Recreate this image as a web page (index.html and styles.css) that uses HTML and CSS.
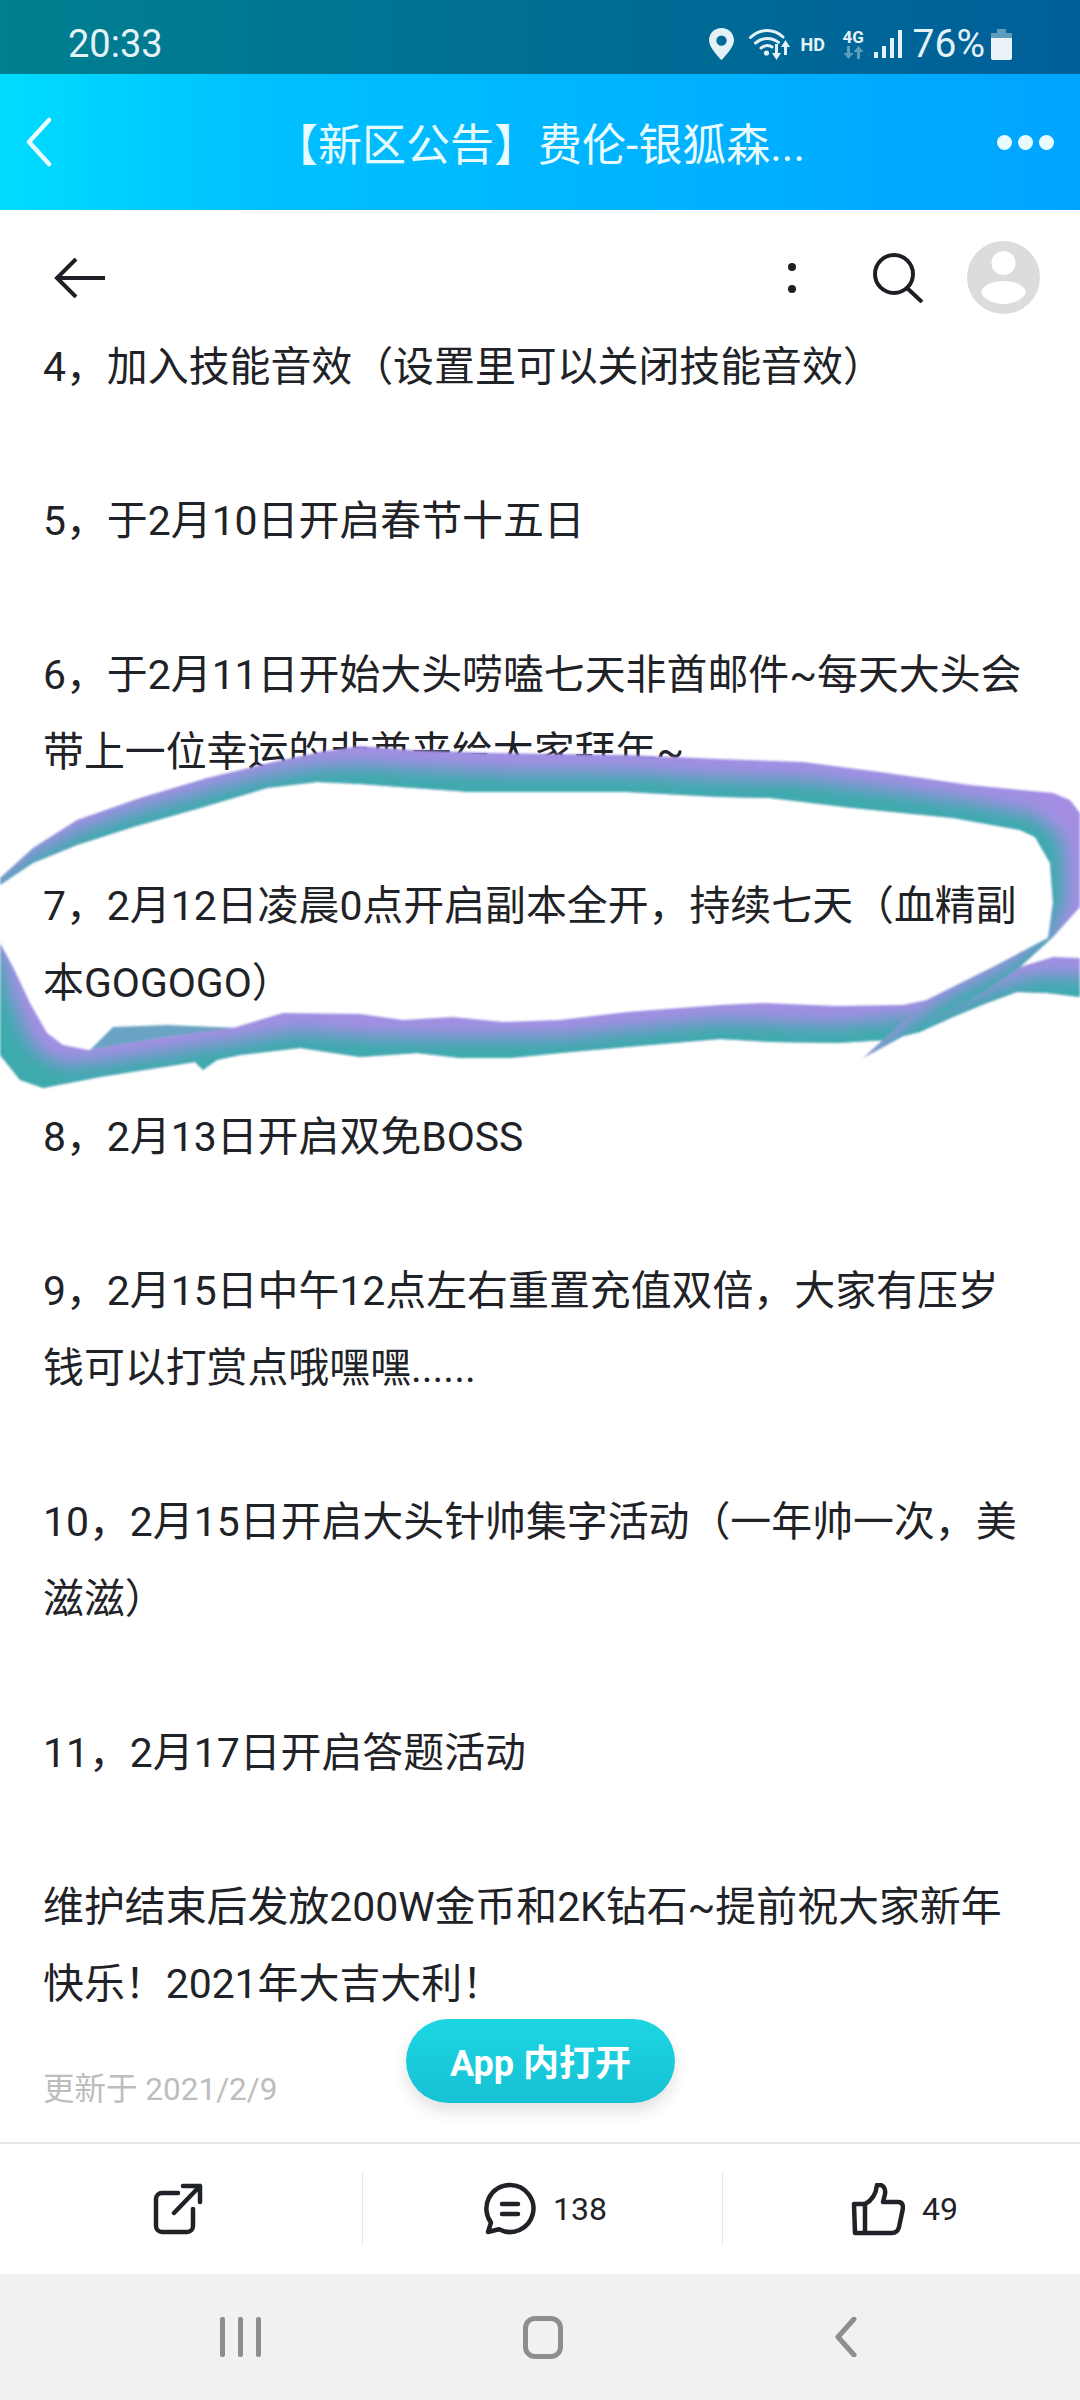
FILE: index.html
```html
<!DOCTYPE html>
<html lang="zh-CN">

<head>
    <meta charset="UTF-8">
    <meta name="viewport" content="width=device-width, initial-scale=1.0">
    <title>新区公告</title>
    <link rel="stylesheet" href="styles.css">
</head>

<body>
    <div class="phone">
        <!--状态栏-->
        <div class="status-bar">
            <span class="clock">20:33</span>
            <div class="status-icons">
                <svg class="ic-pin" viewBox="0 0 25 32"><path fill-rule="evenodd" d="M12.5 0C5.6 0 0 5.4 0 12.2 0 20 12.5 32 12.5 32S25 20 25 12.2C25 5.4 19.4 0 12.5 0zm0 7.4a5.2 5.2 0 1 1 0 10.4 5.2 5.2 0 0 1 0-10.4z"/></svg>
                <svg class="ic-wifi" viewBox="0 0 41 33">
                    <g fill="none" stroke="#e4f2f8" stroke-width="3" stroke-linecap="round">
                        <path d="M1.5 9.5C11 .2 25 .2 34 9"/>
                        <path d="M6.5 15c7-6 16-6 23-.6"/>
                        <path d="M12 20c4-3 8-3 11-1"/>
                    </g>
                    <circle cx="17.5" cy="25" r="2.6" fill="#e4f2f8"/>
                    <path fill="#e4f2f8" d="M26 16h3v9h3l-4.500 7-4.500-7h3zM32 19l4.500-7 4.500 7h-3v8h-3v-8z"/>
                </svg>
                <span class="ic-hd">HD</span>
                <div class="net">
                    <span class="net-label">4G</span>
                    <svg class="net-arrows" viewBox="0 0 23 13"><path d="M4 0h3v7h3.500L5.500 13 .5 7H4zM17 13h-3V6h-3.500l5-6 5 6H17z"/></svg>
                </div>
                <svg class="ic-signal" viewBox="0 0 28 28"><path d="M0 22h4v6H0zM8 16h4v12H8zM16 8h4v20h-4zM24 0h4v28h-4z"/></svg>
                <span class="battery-num">76%</span>
                <div class="battery">
                    <div class="battery-cap"></div>
                    <div class="battery-top"></div>
                    <div class="battery-body"></div>
                </div>
            </div>
        </div>

        <!--标题栏-->
        <div class="title-bar">
            <svg class="title-back" viewBox="0 0 26 50"><path d="M23 3 3 25l20 22"/></svg>
            <div class="title-text">【新区公告】费伦-银狐森...</div>
            <div class="title-more"><i></i><i></i><i></i></div>
        </div>

        <!--工具栏-->
        <div class="tool-bar">
            <svg class="tool-back" viewBox="0 0 52 40"><path d="M22 1 3 20l19 19M3 20h48"/></svg>
            <div class="tool-right">
                <div class="tool-dots"><i></i><i></i></div>
                <svg class="tool-search" viewBox="0 0 52 50"><circle cx="22" cy="21" r="19"/><path d="M35 35l15 14"/></svg>
                <svg class="tool-avatar" viewBox="0 0 73 73">
                    <circle cx="36.500" cy="36.500" r="36.500" fill="#dcdcdc"/>
                    <ellipse cx="36.500" cy="22" rx="12" ry="12" fill="#fff"/>
                    <path fill="#fff" d="M14 52c1-8 12-12 22.500-12S58 44 59 52c-4 7-13 11-22.500 11S18 59 14 52z"/>
                </svg>
            </div>
        </div>

        <!--正文-->
        <div class="content">
            <p>4，加入技能音效（设置里可以关闭技能音效）</p>
            <p>5，于2月10日开启春节十五日</p>
            <p>6，于2月11日开始大头唠嗑七天非酋邮件~每天大头会带上一位幸运的非酋来给大家拜年~</p>
            <p>7，2月12日凌晨0点开启副本全开，持续七天（血精副本GOGOGO）</p>
            <p>8，2月13日开启双免BOSS</p>
            <p>9，2月15日中午12点左右重置充值双倍，大家有压岁钱可以打赏点哦嘿嘿......</p>
            <p>10，2月15日开启大头针帅集字活动（一年帅一次，美滋滋）</p>
            <p>11，2月17日开启答题活动</p>
            <p class="last">维护结束后发放200W金币和2K钻石~提前祝大家新年快乐！2021年大吉大利！</p>
            <div class="updated">更新于 2021/2/9</div>
        </div>

        <!--底部操作栏-->
        <div class="action-bar">
            <div class="action">
                <svg class="ic-share" viewBox="0 0 50 52"><path d="M25 10H9a6 6 0 0 0-6 6v27a6 6 0 0 0 6 6h25a6 6 0 0 0 6-6V26M21 30 47 3M30 3h17v16"/></svg>
            </div>
            <div class="action">
                <svg class="ic-comment" viewBox="0 0 52 54"><path d="M26 3a23.500 23.500 0 1 1-11 44.300L4 50l3-9.500A23.500 23.500 0 0 1 26 3z"/><path d="M18 22h16M18 32h16" stroke-width="4.500"/></svg>
                <span class="count">138</span>
            </div>
            <div class="action">
                <svg class="ic-like" viewBox="0 0 54 53"><path d="M14 21c8-4 11-10 12-19 6-1 9 3 8 9l-2 8h15c4 0 5 3 5 6l-4 19c-1 4-3 6-7 6H14zM14 21H3l1 29h10"/></svg>
                <span class="count">49</span>
            </div>
        </div>

        <!--系统导航栏-->
        <div class="nav-bar">
            <div class="nav-recent"><i></i><i></i><i></i></div>
            <div class="nav-home"></div>
            <svg class="nav-back" viewBox="0 0 22 40"><path d="M19 2 3 20l16 18"/></svg>
        </div>

        <div class="open-app">App 内打开</div>

        <!--手写圈-->
        <svg class="scribble" viewBox="0 720 1080 400">
            <defs>
                <clipPath id="bandTop"><path d="M0 878 33 848 77 820 140 798 207 778 273 762 320 752 360 746 410 750 493 753 627 755 720 759 803 762 887 773 970 785 1053 793 1070 800 1080 813 1080 907 1053 937 1020 967 987 990 920 1027 863 1058 927 1000 987 970 1048 938 1053 903 1050 863 1035 837 1020 830 953 818 853 808 770 798 720 797 627 792 527 792 470 792 400 787 360 784 317 782 267 788 200 808 133 827 77 845 33 863 0 885z"/></clipPath>
                <clipPath id="bandBottom"><path d="M0 943 13 967 30 1003 47 1033 63 1045 88 1050 167 1037 233 1028 283 1013 360 1014 403 1020 453 1017 503 1022 560 1020 627 1012 720 1005 763 1003 837 1006 903 1005 927 1000 987 970 1020 967 1053 957 1080 958 1080 997 1047 993 1017 992 987 1003 953 1017 920 1032 887 1040 837 1043 770 1042 720 1039 627 1047 560 1053 510 1058 460 1058 417 1053 360 1057 300 1048 240 1055 217 1060 203 1070 195 1062 100 1077 43 1088 20 1080 0 1055z"/></clipPath>
                <filter id="blend" filterUnits="userSpaceOnUse" x="-60" y="700" width="1200" height="440"><feGaussianBlur stdDeviation="9"/></filter>
                <filter id="edge" filterUnits="userSpaceOnUse" x="-10" y="720" width="1100" height="400"><feGaussianBlur stdDeviation="1"/></filter>
            </defs>
            <g filter="url(#edge)">
                <path class="flap" d="M90 1050 113 1027 167 1025 240 1028 167 1037z"/>
                <g clip-path="url(#bandBottom)">
                    <rect class="purple" x="0" y="720" width="1080" height="400"/>
                    <path class="teal" filter="url(#blend)" d="M1120 977 1080 977 1050 975 1018 980 960 1003 923 1016 837 1025 720 1021 627 1030 560 1037 460 1038 360 1036 300 1031 233 1042 167 1052 100 1062 63 1065 35 1050 20 1020 8 985 0 950-40 950-40 1120 1120 1120z"/>
                </g>
                <g clip-path="url(#bandTop)">
                    <rect class="purple" x="0" y="720" width="1080" height="400"/>
                    <path class="teal" filter="url(#blend)" d="M-40 905 0 881 33 855 77 832 133 812 200 793 267 775 317 767 360 765 410 768 493 772 627 773 720 778 803 780 887 790 970 802 1035 815 1062 840 1066 900 1050 935 600 900 0 900zM1050 935 1005 968 960 990 920 1015 863 1060 1000 1090 1120 980z"/>
                </g>
            </g>
        </svg>
    </div>
</body>

</html>
```

FILE: styles.css
```css
* {
    margin: 0;
    padding: 0;
    box-sizing: border-box;
}

body {
    font-family: Roboto, "Noto Sans CJK SC", sans-serif;
    background-color: #fff;
}

svg {
    display: block;
}

.phone {
    width: 1080px;
    height: 2400px;
    position: relative;
    overflow: hidden;
    display: flex;
    flex-direction: column;
}

/*状态栏*/

.status-bar {
    height: 74px;
    flex: none;
    display: flex;
    align-items: center;
    justify-content: space-between;
    padding: 14px 68px 0 68px;
    background: linear-gradient(90deg, #007f8f, #005f99);
    color: #e4f2f8;
}

.clock {
    font-size: 38px;
}

.status-icons {
    display: flex;
    align-items: center;
}

.ic-pin {
    width: 25px;
    height: 32px;
    fill: #e4f2f8;
    margin-right: 15px;
}

.ic-wifi {
    width: 41px;
    height: 33px;
    margin-right: 11px;
}

.ic-hd {
    font-size: 18px;
    font-weight: 700;
    width: 25px;
    margin-right: 17px;
}

.net {
    width: 23px;
    margin-right: 8px;
}

.net-label {
    display: block;
    font-size: 17px;
    line-height: 17px;
    font-weight: 700;
}

.net-arrows {
    width: 23px;
    height: 13px;
    fill: #5f9dbd;
}

.ic-signal {
    width: 28px;
    height: 28px;
    fill: #e4f2f8;
    margin-right: 11px;
}

.battery-num {
    font-size: 39px;
    margin-right: 6px;
}

.battery {
    width: 21px;
    height: 31px;
    display: flex;
    flex-direction: column;
    align-items: center;
}

.battery-cap {
    width: 9px;
    height: 4px;
    background-color: #5f9dbd;
}

.battery-top {
    width: 21px;
    height: 5px;
    background-color: #5f9dbd;
}

.battery-body {
    width: 21px;
    flex: 1;
    background-color: #e9f3f8;
    border-radius: 0 0 2px 2px;
}

/*标题栏*/

.title-bar {
    height: 136px;
    flex: none;
    display: flex;
    align-items: center;
    justify-content: space-between;
    padding: 0 26px 0 26px;
    background: linear-gradient(90deg, #00dcff, #00c0ff 25%, #00a4ff);
    color: #fff;
}

.title-back {
    width: 26px;
    height: 50px;
    fill: none;
    stroke: #e8fbff;
    stroke-width: 4.500;
    stroke-linecap: round;
    stroke-linejoin: round;
}

.title-text {
    font-size: 44px;
    white-space: nowrap;
    color: #e8fbff;
    margin-left: 30px;
}

.title-more {
    display: flex;
    gap: 6px;
}

.title-more i {
    width: 15px;
    height: 15px;
    border-radius: 50%;
    background-color: #e8fbff;
}

/*工具栏*/

.tool-bar {
    height: 117px;
    flex: none;
    display: flex;
    align-items: center;
    justify-content: space-between;
    padding: 18px 40px 0 54px;
}

.tool-back {
    width: 52px;
    height: 40px;
    fill: none;
    stroke: #1d1f24;
    stroke-width: 4;
}

.tool-right {
    display: flex;
    align-items: center;
}

.tool-dots {
    display: flex;
    flex-direction: column;
    gap: 14px;
    margin-right: 76px;
}

.tool-dots i {
    width: 8px;
    height: 8px;
    border-radius: 50%;
    background-color: #1d1f24;
}

.tool-search {
    width: 52px;
    height: 50px;
    margin-right: 43px;
    fill: none;
    stroke: #1d1f24;
    stroke-width: 4;
}

.tool-avatar {
    width: 73px;
    height: 73px;
}

/*正文*/

.content {
    flex: 1;
    padding: 2px 43px 0;
    overflow: hidden;
    font-size: 40.900px;
    line-height: 77px;
    color: #1f2226;
}

.content p {
    margin-bottom: 77px;
}

.content p.last {
    margin-bottom: 47px;
}

.updated {
    font-size: 31.500px;
    line-height: 40px;
    color: #bdbdbd;
}

/*底部操作栏*/

.action-bar {
    height: 132px;
    flex: none;
    display: grid;
    grid-template-columns: 362px 360px 358px;
    align-items: center;
    border-top: 2px solid #e6e6e6;
}

.action {
    height: 74px;
    display: flex;
    align-items: center;
    justify-content: center;
    gap: 17px;
    padding-left: 6px;
    border-left: 1px solid #e8e8e8;
    color: #1f2226;
}

.action:first-child {
    padding: 0 6px 0 0;
    border-left: 0;
}

.count {
    font-size: 32px;
}

.ic-share,
.ic-comment,
.ic-like {
    fill: none;
    stroke: #1f2226;
    stroke-width: 4.500;
    stroke-linejoin: round;
    stroke-linecap: round;
}

.ic-share {
    width: 50px;
    height: 52px;
}

.ic-comment {
    width: 52px;
    height: 54px;
}

.ic-like {
    width: 54px;
    height: 53px;
}

/*系统导航栏*/

.nav-bar {
    height: 126px;
    flex: none;
    display: flex;
    align-items: center;
    justify-content: space-between;
    padding: 0 223px 0 220px;
    background-color: #f1f1f1;
}

.nav-recent {
    display: flex;
    gap: 13px;
}

.nav-recent i {
    width: 5px;
    height: 40px;
    background-color: #8e8e8e;
    border-radius: 2px;
}

.nav-home {
    width: 40px;
    height: 43px;
    margin-right: 10px;
    border: 5px solid #8e8e8e;
    border-radius: 12px;
}

.nav-back {
    width: 22px;
    height: 40px;
    fill: none;
    stroke: #8e8e8e;
    stroke-width: 5;
    stroke-linecap: round;
    stroke-linejoin: round;
}

/*悬浮按钮*/

.open-app {
    position: absolute;
    left: 406px;
    top: 2019px;
    width: 269px;
    height: 84px;
    border-radius: 42px;
    background: linear-gradient(180deg, #1cd6e2, #17c1d4);
    box-shadow: 0 8px 16px rgba(0, 0, 0, 0.12);
    color: #fff;
    font-size: 36px;
    font-weight: 700;
    line-height: 90px;
    text-align: center;
}

/*手写圈*/

.scribble {
    position: absolute;
    left: 0;
    top: 720px;
    width: 1080px;
    height: 400px;
}

.purple {
    fill: #a48ee4;
}

.teal {
    fill: #3eaaad;
}

.flap {
    fill: #6aa3c4;
}
```
